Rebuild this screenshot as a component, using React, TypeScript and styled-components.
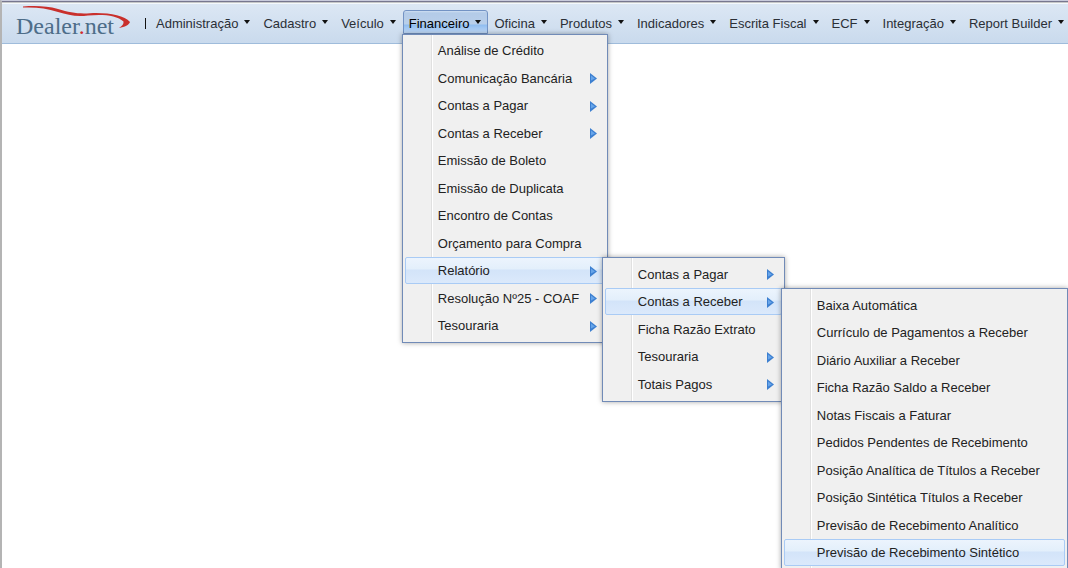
import React from "react";
import styled, { createGlobalStyle, css } from "styled-components";

type Entry = { label: string; active?: boolean; arrow?: boolean; menu?: MenuData };
type MenuData = { width: number; overlap: number; entries: Entry[] };

const receivables: MenuData = {
  width: 287,
  overlap: 1,
  entries: [
    { label: "Baixa Automática" },
    { label: "Currículo de Pagamentos a Receber" },
    { label: "Diário Auxiliar a Receber" },
    { label: "Ficha Razão Saldo a Receber" },
    { label: "Notas Fiscais a Faturar" },
    { label: "Pedidos Pendentes de Recebimento" },
    { label: "Posição Analítica de Títulos a Receber" },
    { label: "Posição Sintética Títulos a Receber" },
    { label: "Previsão de Recebimento Analítico" },
    { label: "Previsão de Recebimento Sintético", active: true },
  ],
};

const reports: MenuData = {
  width: 183,
  overlap: 3,
  entries: [
    { label: "Contas a Pagar", arrow: true },
    { label: "Contas a Receber", arrow: true, active: true, menu: receivables },
    { label: "Ficha Razão Extrato" },
    { label: "Tesouraria", arrow: true },
    { label: "Totais Pagos", arrow: true },
  ],
};

const finance: MenuData = {
  width: 206,
  overlap: 0,
  entries: [
    { label: "Análise de Crédito" },
    { label: "Comunicação Bancária", arrow: true },
    { label: "Contas a Pagar", arrow: true },
    { label: "Contas a Receber", arrow: true },
    { label: "Emissão de Boleto" },
    { label: "Emissão de Duplicata" },
    { label: "Encontro de Contas" },
    { label: "Orçamento para Compra" },
    { label: "Relatório", arrow: true, active: true, menu: reports },
    { label: "Resolução Nº25 - COAF", arrow: true },
    { label: "Tesouraria", arrow: true },
  ],
};

const bar: Entry[] = [
  { label: "Administração" },
  { label: "Cadastro" },
  { label: "Veículo" },
  { label: "Financeiro", active: true, menu: finance },
  { label: "Oficina" },
  { label: "Produtos" },
  { label: "Indicadores" },
  { label: "Escrita Fiscal" },
  { label: "ECF" },
  { label: "Integração" },
  { label: "Report Builder" },
];

const GlobalStyle = createGlobalStyle`
  * { box-sizing: border-box; }
  body {
    margin: 0;
    background: #fff;
    color: #222;
    font: 13px/16px "Liberation Sans", Arial, sans-serif;
  }
`;

const Page = styled.div`
  height: 100vh;
  overflow: hidden;
  border-top: 1px solid #c9cbdc;
  border-left: 2px solid #b4b4b4;
`;

const Header = styled.header`
  display: flex;
  align-items: flex-start;
  height: 43px;
  border-top: 1px solid #77778f;
  border-bottom: 1px solid #9fbcdb;
  background: linear-gradient(#c6c8c8 0 1px, #f4f8fb 1px 2px, #dce7f4 2px, #c9daed);
`;

const Logo = styled.svg`
  flex: none;
  width: 140px;
  height: 40px;
`;

const Divider = styled.span`
  flex: none;
  width: 1px;
  height: 11px;
  margin: 16px 4px 0 3px;
  background: #111;
`;

const Nav = styled.ul`
  display: flex;
  margin: 0;
  padding: 8px 0 0;
  list-style: none;
  white-space: nowrap;
`;

const NavItem = styled.li`
  position: relative;
`;

const NavButton = styled.button<{ $active?: boolean }>`
  display: flex;
  gap: 6px;
  height: 24px;
  padding: 4px 6px 2px 5px;
  border: 1px solid transparent;
  border-radius: 3px 3px 0 0;
  background: none;
  color: #2b2f36;
  font: inherit;
  line-height: 18px;
  ${(p) =>
    p.$active &&
    css`
      border-color: #7393c4;
      background: linear-gradient(#cfdff2 0, #b3cbe8 2px, #b9cfea 13px, #8fbdf0 14px, #b4d2f5 20px, #c4dbf6);
      color: #000;
    `}
`;

const Caret = styled.span`
  width: 0;
  height: 0;
  margin-top: 5px;
  border: 3px solid transparent;
  border-top: 4px solid #111;
  border-bottom: 0;
`;

const Row = styled.li`
  position: relative;
  height: 27px;
`;

const Panel = styled.ul<{ $root?: boolean; $width: number; $overlap: number }>`
  position: absolute;
  z-index: 1;
  top: ${(p) => (p.$root ? "24px" : "0")};
  left: ${(p) => (p.$root ? "-1px" : `calc(100% - ${p.$overlap}px)`)};
  width: ${(p) => p.$width}px;
  margin: 0;
  padding: 2px 2px 3px;
  border: 1px solid #718bb7;
  background: linear-gradient(90deg, transparent 28px, #e0e0e0 28px 29px, #fff 29px 30px, transparent 30px) #f0f0f0;
  box-shadow: 0 0 5px rgba(0, 0, 0, 0.35);
  list-style: none;

  > ${Row}:nth-child(${(p) => (p.$root ? "even" : "odd")}) {
    height: 28px;
  }
`;

const RowButton = styled.button<{ $active?: boolean }>`
  display: flex;
  align-items: center;
  justify-content: space-between;
  width: 100%;
  height: 100%;
  padding: 1px 7px 0 32px;
  border: 1px solid transparent;
  border-radius: 2px;
  background: none;
  color: #222;
  font: inherit;
  text-align: left;
  white-space: nowrap;
  ${(p) =>
    p.$active &&
    css`
      border-color: #a9cbf5;
      background: linear-gradient(#ecf4fd 0, #e3effb 11px, #d3e4f9 12px, #dbe9fb);
    `}
`;

const Arrow = () => (
  <svg width="7" height="11" viewBox="0 0 7 11" aria-hidden="true">
    <path d="M0 0L7 5.5L0 11Z" fill="#3c7fd0" />
    <path d="M1 2.5L5 5.5L1 7.5Z" fill="#67a5ea" />
  </svg>
);

const Menu = ({ menu, root }: { menu: MenuData; root?: boolean }) => (
  <Panel $root={root} $width={menu.width} $overlap={menu.overlap}>
    {menu.entries.map((e) => (
      <Row key={e.label}>
        <RowButton type="button" $active={e.active}>
          {e.label}
          {e.arrow && <Arrow />}
        </RowButton>
        {e.menu && <Menu menu={e.menu} />}
      </Row>
    ))}
  </Panel>
);

export default function App() {
  return (
    <Page>
      <GlobalStyle />
      <Header>
        <Logo viewBox="2 2 140 40" role="img" aria-label="Dealer.net">
          <text x="16" y="34" fontFamily="Liberation Serif, serif" fontSize="24" fill="#4d6d89">
            Dealer<tspan fill="#d22b2b">.</tspan>net
          </text>
          <path
            d="M23 6.5C36 5.5 47 6 58 9C70 12.5 78 14 90 13.2C108 12.4 124 15 130 22C129 25 125 27 119 28C122 26 124 24 123.500 21.500C117 15 102 14 88 15.500C76 17 68 15 58 12C46 8 36 7 23 7.500Z"
            fill="#c9302c"
          />
        </Logo>
        <Divider />
        <nav>
          <Nav>
            {bar.map((e) => (
              <NavItem key={e.label}>
                <NavButton type="button" $active={e.active}>
                  {e.label}
                  <Caret />
                </NavButton>
                {e.menu && <Menu menu={e.menu} root />}
              </NavItem>
            ))}
          </Nav>
        </nav>
      </Header>
    </Page>
  );
}
